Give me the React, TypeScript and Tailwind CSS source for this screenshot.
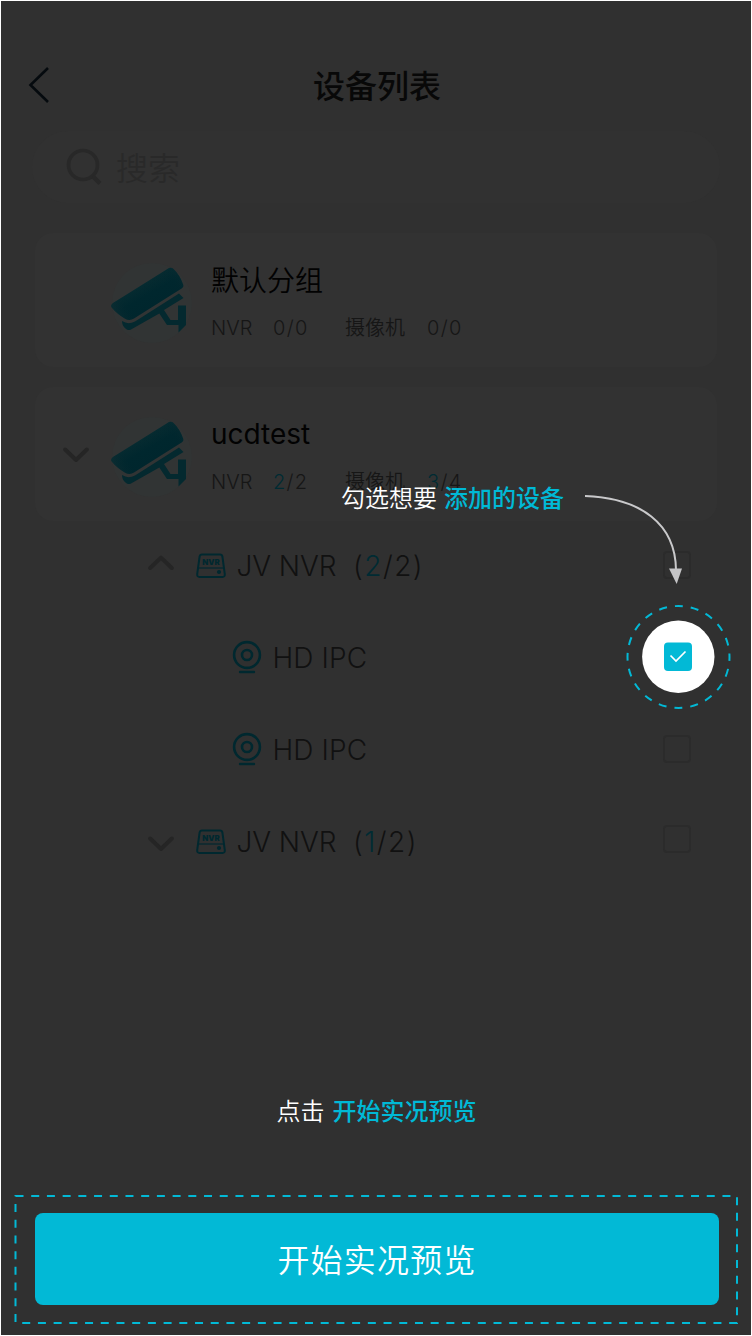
import type { ReactNode } from "react";

function Chevron({ up = false, className = "" }: { up?: boolean; className?: string }) {
  return (
    <svg width="26" height="16" viewBox="0 0 26 16" fill="none" className={className}>
      <path
        d={up ? "M2.200 13 L13 2.600 L23.800 13" : "M2.200 2.500 L13 13 L23.800 2.500"}
        stroke="#252525"
        strokeWidth="4"
        strokeLinecap="round"
        strokeLinejoin="round"
      />
    </svg>
  );
}

function CameraLogo() {
  return (
    <svg width="84" height="84" viewBox="0 0 84 84" className="mt-[5px] shrink-0">
      <defs>
        <linearGradient id="body" x1="28" y1="22" x2="44" y2="50" gradientUnits="userSpaceOnUse">
          <stop offset="0" stopColor="#082c31" />
          <stop offset="0.5" stopColor="#00272e" />
          <stop offset="1" stopColor="#00262d" />
        </linearGradient>
        <linearGradient id="shine" x1="8" y1="52" x2="78" y2="12" gradientUnits="userSpaceOnUse">
          <stop offset="0" stopColor="#142f33" stopOpacity="0.4" />
          <stop offset="0.2" stopColor="#00262d" stopOpacity="0" />
          <stop offset="0.8" stopColor="#00262d" stopOpacity="0.1" />
          <stop offset="1" stopColor="#142f33" stopOpacity="0.5" />
        </linearGradient>
      </defs>
      <circle cx="44" cy="42" r="40" fill="#313434" />
      <path
        d="M61 7 Q63.500 6 65.500 8 Q72 14 75.300 24 Q75.800 26 74 27.300 L26 57.500 Q22 60 17.500 58 Q9 53 3.700 46.500 Q2 44.500 5 42 Z"
        fill="url(#body)"
      />
      <path
        d="M61 7 Q63.500 6 65.500 8 Q72 14 75.300 24 Q75.800 26 74 27.300 L26 57.500 Q22 60 17.500 58 Q9 53 3.700 46.500 Q2 44.500 5 42 Z"
        fill="url(#shine)"
      />
      <path
        d="M71 32.500 L75.500 37 L56 49 L62.500 59 H70 V44.500 H78 V64 L70.500 71.500 V64 H59 L51.300 52.500 L23 68.500 Q20 70 17.500 67.500 Q14 64.500 14 60 Q20 64 27 60.500 Z"
        fill="#04292f"
      />
    </svg>
  );
}

function NvrIcon() {
  return (
    <svg width="30" height="26" viewBox="0 0 30 26" fill="none" stroke="#00282f" strokeWidth="2" className="mt-[2px] shrink-0">
      <path d="M6 1.500 H24 Q26 1.500 26.400 3.500 L28.800 21 Q29 24 26.500 24 H3.500 Q1 24 1.200 21 L3.600 3.500 Q4 1.500 6 1.500 Z" />
      <path d="M3 15 H27" strokeWidth="1.200" />
      <circle cx="23" cy="19" r="2.100" fill="#00282f" stroke="none" />
      <text
        x="15"
        y="12.200"
        textAnchor="middle"
        textLength="17.500"
        lengthAdjust="spacingAndGlyphs"
        fill="#00282f"
        stroke="none"
        className="font-['Inter'] text-[8px] font-black"
      >
        NVR
      </text>
    </svg>
  );
}

function IpcIcon() {
  return (
    <svg width="30" height="34" viewBox="0 0 30 34" fill="none" stroke="#00282f" strokeWidth="2.600" className="shrink-0">
      <circle cx="15" cy="15" r="12.900" />
      <circle cx="15" cy="15" r="5" />
      <path d="M8 32 H22" strokeWidth="2.400" strokeLinecap="round" />
    </svg>
  );
}

function Count({ label, value, total, wide }: { label: string; value: string; total: string; wide?: boolean }) {
  return (
    <div className="flex items-center">
      <span className={wide ? "w-[82px]" : "w-[62px]"}>{label}</span>
      <span className="tracking-[1.3px]">
        <span className={value === "0" ? "" : "text-[#002b33]"}>{value}</span>/{total}
      </span>
    </div>
  );
}

function Group({ name, nvr, camera, open }: { name: string; nvr: [string, string]; camera: [string, string]; open?: boolean }) {
  return (
    <div className="flex h-[134px] items-center rounded-[18px] bg-[#323232]">
      <div className="w-[73px] shrink-0 pt-[2px] pl-[28px]">{open && <Chevron />}</div>
      <CameraLogo />
      <div className="flex h-full flex-col pt-[29px] pl-[19px]">
        <div className={`h-[40px] text-[28px] leading-[36px] text-[#020202] ${open ? "font-normal" : "pt-px font-[350]"}`}>
          {name}
        </div>
        <div className="mt-[11px] flex h-[30px] text-[20px] leading-[30px] font-[350] text-[#161616]">
          <div className="w-[134px]">
            <Count label="NVR" value={nvr[0]} total={nvr[1]} />
          </div>
          <Count label="摄像机" value={camera[0]} total={camera[1]} wide />
        </div>
      </div>
    </div>
  );
}

function Row({ children, box = true, boxClass = "" }: { children: ReactNode; box?: boolean; boxClass?: string }) {
  return (
    <div className="flex h-[92px] items-center justify-between pr-[60px] text-[28px] font-[350] text-[#111111]">
      <div className="flex items-center">{children}</div>
      {box && <div className={`h-[28px] w-[28px] rounded-[4px] border-2 border-[#2b2b2b] ${boxClass}`} />}
    </div>
  );
}

function NvrRow({ value, up, boxClass }: { value: string; up?: boolean; boxClass?: string }) {
  return (
    <Row boxClass={boxClass}>
      <Chevron up={up} className={up ? "ml-[147px] -mt-[5px]" : "ml-[147px] mt-[5px]"} />
      <div className="ml-[22px] flex items-center">
        <NvrIcon />
        <span className="ml-[10.5px] w-[116.500px] pt-px tracking-[-0.1px]">JV NVR</span>
        <span className="pt-px tracking-[1.5px]">
          (<span className="text-[#002b33]">{value}</span>/2)
        </span>
      </div>
    </Row>
  );
}

function IpcRow({ box }: { box?: boolean }) {
  return (
    <Row box={box}>
      <div className="ml-[231px] flex items-center">
        <IpcIcon />
        <span className="ml-[10.5px] pt-px tracking-[0.1px]">HD IPC</span>
      </div>
    </Row>
  );
}

export default function App() {
  return (
    <div className="relative h-[1336px] w-[752px] overflow-hidden border border-white bg-[#303030] font-['Inter','Noto_Sans_CJK_SC',sans-serif] whitespace-nowrap">
      <div className="flex h-[1334px] flex-col">
        <header className="grid h-[130px] grid-cols-[100px_1fr_98px] items-center pt-[38px]">
          <svg width="22" height="36" viewBox="0 0 22 36" fill="none" className="ml-[27px]">
            <path d="M20 1 L2.500 18 L20 35" stroke="#050a0e" strokeWidth="2.600" />
          </svg>
          <h1 className="pt-[4px] text-center text-[32px] leading-[46px] font-medium text-[#080808]">设备列表</h1>
        </header>
        <div className="mx-[31px] flex h-[72px] items-center rounded-full bg-[#313131] pl-[34px]">
          <svg width="36" height="38" viewBox="0 0 36 38" fill="none" stroke="#282828" strokeWidth="3.700">
            <circle cx="17" cy="17" r="14.500" />
            <path d="M27 28.500 L34 35.500" strokeWidth="4" />
          </svg>
          <span className="mt-[4px] ml-[14px] text-[32px] leading-[46px] font-[350] text-[#292929]">搜索</span>
        </div>
        <div className="mx-[34px] mt-[30px] flex flex-col gap-[20px]">
          <Group name="默认分组" nvr={["0", "0"]} camera={["0", "0"]} />
          <Group name="ucdtest" nvr={["2", "2"]} camera={["3", "4"]} open />
        </div>
        <div className="-mt-[2px] flex flex-col">
          <NvrRow value="2" up />
          <IpcRow box={false} />
          <IpcRow />
          <NvrRow value="1" boxClass="-mt-[4px]" />
        </div>
        <div className="mt-auto flex h-[36px] items-center justify-center gap-[8px] pl-px text-[24px]">
          <span className="font-[350] text-white">点击</span>
          <span className="font-medium text-[#00b9d6]">开始实况预览</span>
        </div>
        <div className="mt-[83px] pr-[32px] pb-[30px] pl-[34px]">
          <button className="h-[92px] w-full rounded-[8px] bg-[#02b9d6] pt-[4px] text-[32px] font-[350] tracking-[1.2px] text-white">
            开始实况预览
          </button>
        </div>
      </div>

      <div className="absolute top-[480px] left-[340px] flex h-[36px] items-center gap-[7px] text-[24px] leading-[36px]">
        <span className="font-[350] text-white">勾选想要</span>
        <span className="font-medium text-[#00b9d6]">添加的设备</span>
      </div>
      <svg className="absolute top-[480px] left-[569px]" width="180" height="240" viewBox="570 481 180 240" fill="none">
        <path d="M585 496 C641 498 675.500 524 676 570" stroke="#c9c9cb" strokeWidth="2" />
        <path d="M669 568.500 H682 L676.700 584 Z" fill="#c4c4c6" />
        <circle cx="678.500" cy="657" r="51" stroke="#02b9d6" strokeWidth="2" strokeDasharray="8 8.020" strokeDashoffset="4" />
        <circle cx="678.300" cy="656.800" r="36.200" fill="#fff" />
        <rect x="664" y="642.500" width="28" height="28.500" rx="4" fill="#02b9d6" />
        <path d="M670.500 655.500 L676 661 L685.500 651.500" stroke="#fff" strokeWidth="1.700" />
      </svg>
      <svg className="absolute top-[1192px] left-[12px]" width="728" height="136" viewBox="13 1193 728 136" fill="none">
        <rect x="15.500" y="1196" width="721.500" height="127" stroke="#02b9d6" strokeWidth="2" strokeDasharray="8 7.710" />
      </svg>
      <div className="absolute -top-px left-0 h-px w-[10px] bg-black" />
      <div className="absolute -top-px right-0 h-px w-[10px] bg-black" />
      <div className="absolute top-[893px] -left-px h-[132px] w-px bg-black" />
      <div className="absolute top-[893px] -right-px h-[133px] w-px bg-black" />
    </div>
  );
}
